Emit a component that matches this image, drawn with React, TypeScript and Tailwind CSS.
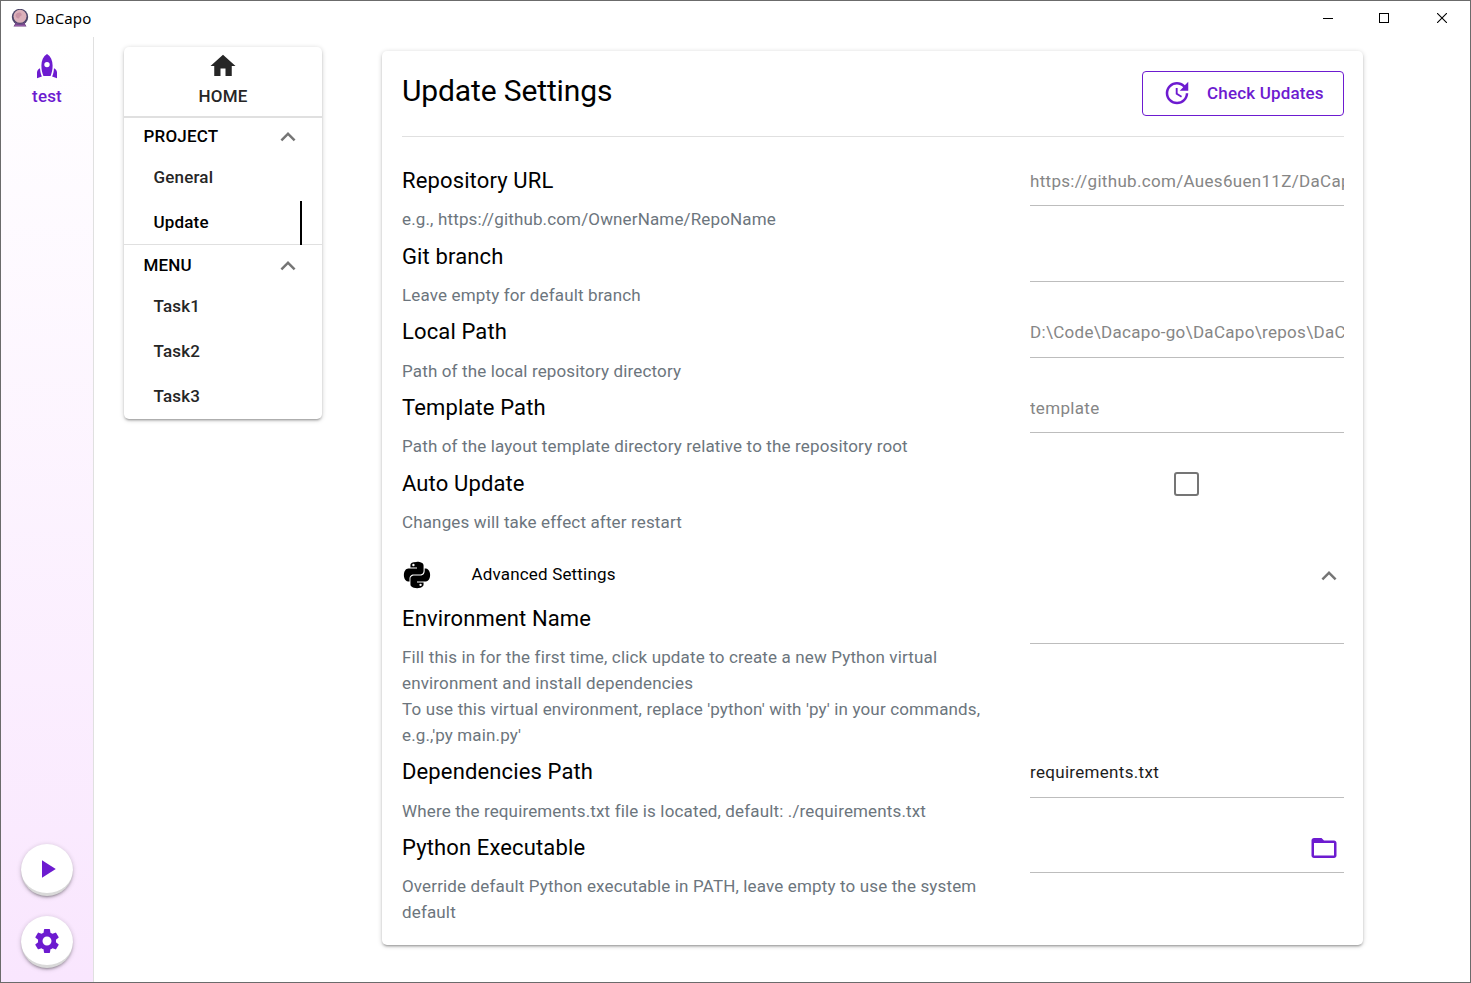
import React from "react";
import { MdHome, MdKeyboardArrowUp, MdPlayArrow, MdSettings, MdFolderOpen } from "react-icons/md";
import { IoLogoPython } from "react-icons/io5";

function Rocket() {
  return (
    <svg viewBox="0 0 20 25" className="mt-[17px] h-[25px] w-[20px] shrink-0" fill="currentColor">
      <path
        fillRule="evenodd"
        d="M10 0c3.800 2.400 5.600 6.500 5.600 11.500 0 4-.7 7.300-2 10.500H6.400C5.100 18.800 4.400 15.500 4.400 11.500 4.400 6.500 6.200 2.400 10 0zm0 7.900a2.700 2.700 0 1 0 0 5.400 2.700 2.700 0 0 0 0-5.400z"
      />
      <path d="M3 14.300c.2 3.200.8 5.900 1.900 8.300L0 24.300V18.500c0-1.800 1.200-3.300 3-4.200zM17 14.300c-.2 3.200-.8 5.900-1.900 8.300l4.900 1.700V18.500c0-1.800-1.200-3.300-3-4.200z" />
    </svg>
  );
}

function UpdateIcon() {
  return (
    <svg viewBox="0 0 24 24" className="-mt-[1px] ml-[19px] size-[30px]" fill="currentColor">
      <path d="M21,10.12H14.22L16.96,7.3C14.23,4.6 9.81,4.5 7.08,7.2C4.35,9.91 4.35,14.28 7.08,17C9.81,19.7 14.23,19.7 16.96,17C18.32,15.65 19,14.08 19,12.1H21C21,14.08 20.12,16.65 18.36,18.39C14.85,21.87 9.15,21.87 5.64,18.39C2.14,14.92 2.11,9.28 5.62,5.81C9.13,2.34 14.76,2.34 18.27,5.81L21,3V10.12M12.5,8V12.25L16,14.33L15.28,15.54L11,13V8H12.5Z" />
    </svg>
  );
}

function Logo() {
  return (
    <svg viewBox="0 0 18 18" className="-mt-[2px] size-[18px]">
      <path d="M4.500 14h9l2 3.500h-13z" fill="#6d3f80" />
      <circle cx="9" cy="8" r="8.200" fill="#4a4468" />
      <circle cx="9" cy="7.300" r="6.500" fill="#dcb0ba" />
      <path d="M4.500 6c2-3 5-3 6-1s-1.500 1.500-2 3.500-4 .5-4-2.500z" fill="#c893a5" />
      <path d="M3.500 12.500c3 3 8 3 11 0l-1.500 3h-8z" fill="#7a4a90" />
      <path d="M4 16.300h10" stroke="#a05fae" />
    </svg>
  );
}

function TitleBar() {
  return (
    <header className="flex h-9 shrink-0 items-center pr-[23px] pl-[10px]">
      <Logo />
      <span className="-mt-[2px] ml-[6px] flex-1 font-['Noto_Sans',sans-serif] text-[15px] tracking-[0.15px] text-black">DaCapo</span>
      <div className="-mt-[2px] flex gap-[46px]">
        <svg viewBox="0 0 10 10" className="h-[10px] w-[10px]">
          <path d="M0 5.500h10" stroke="#000" shapeRendering="crispEdges" />
        </svg>
        <svg viewBox="0 0 10 10" className="h-[10px] w-[10px]">
          <rect x=".5" y=".5" width="9" height="9" fill="none" stroke="#000" shapeRendering="crispEdges" />
        </svg>
        <svg viewBox="0 0 10 10" className="ml-[2px] h-[10px] w-[10px]">
          <path d="M0 0l10 10M10 0L0 10" stroke="#000" strokeWidth="1.100" />
        </svg>
      </div>
    </header>
  );
}

const cardShadow = "shadow-[0_1px_5px_rgba(0,0,0,0.2),0_2px_2px_rgba(0,0,0,0.14),0_3px_1px_-2px_rgba(0,0,0,0.12)]";

function MenuHead({ label, className }: { label: string; className: string }) {
  return (
    <div className={"flex items-center justify-between pr-[19px] pl-[19.5px] text-black " + className}>
      <span>{label}</span>
      <MdKeyboardArrowUp className="size-[30px] text-[#757575]" />
    </div>
  );
}

function MenuItem({ label, className = "h-[45px]" }: { label: string; className?: string }) {
  return <div className={"mr-5 flex items-center pl-[29.5px] " + className}>{label}</div>;
}

type FieldProps = {
  title: string;
  hint: React.ReactNode;
  className?: string;
  children?: React.ReactNode;
  line?: boolean;
};

function Field({ title, hint, className = "h-[75.75px]", children, line = true }: FieldProps) {
  return (
    <div className={"flex justify-between " + className}>
      <div className="w-[608px]">
        <div className="h-[51px] pt-[11.75px] text-[22px] leading-[28px] tracking-[0.13px] text-black">{title}</div>
        <div className="text-[17px] leading-[26px] tracking-[0.145px] text-[#6c757d]">{hint}</div>
      </div>
      <div
        className={
          line
            ? "flex h-[51px] w-[314px] items-center overflow-hidden border-b border-[#bdbdbd] pt-[3px] text-[17px] tracking-[0.31px] whitespace-nowrap"
            : "flex h-[51px] w-[314px] items-center justify-center pr-[2px]"
        }
      >
        {children}
      </div>
    </div>
  );
}

function RoundButton({ children }: { children: React.ReactNode }) {
  return (
    <button className={"flex size-[52px] items-center justify-center rounded-full border-b-3 border-black/15 bg-white " + cardShadow}>
      {children}
    </button>
  );
}

export default function App() {
  return (
    <div className="flex h-[983px] w-[1471px] flex-col overflow-hidden border border-[#6b6b6b] bg-white font-[Roboto,sans-serif] text-[17px] tracking-[0.17px] text-[#262626]">
      <TitleBar />
      <div className="flex min-h-0 flex-1">
        <aside className="flex w-[93px] shrink-0 flex-col items-center border-r border-[#e0e0e0] bg-linear-to-b from-white to-[#f9e6fe] pb-[14px] text-[#6d1bd0]">
          <Rocket />
          <span className="mt-[5px] font-medium">test</span>
          <div className="mt-auto flex flex-col gap-5">
            <RoundButton>
              <MdPlayArrow className="size-[30px]" />
            </RoundButton>
            <RoundButton>
              <MdSettings className="size-[30px]" />
            </RoundButton>
          </div>
        </aside>
        <nav className={"mt-[10px] ml-[30px] h-[372px] w-[198px] shrink-0 rounded-[5px] font-medium " + cardShadow}>
          <div className="flex h-[71px] flex-col items-center border-b-2 border-[#e0e0e0] pt-[4px]">
            <MdHome className="size-[30px]" />
            <span className="mt-[3px]">HOME</span>
          </div>
          <div className="h-[127px] border-b border-[#e0e0e0]">
            <MenuHead label="PROJECT" className="h-[38px]" />
            <MenuItem label="General" className="h-[45px] pb-[2px]" />
            <MenuItem label="Update" className="h-[44px] border-r-2 border-black pb-[1px] text-black" />
          </div>
          <MenuHead label="MENU" className="h-[39px] pt-[2px]" />
          <MenuItem label="Task1" />
          <MenuItem label="Task2" />
          <MenuItem label="Task3" />
        </nav>
        <main className={"mt-[14px] ml-[60px] h-[894px] w-[981px] shrink-0 rounded-[5px] pr-[19px] pl-5 " + cardShadow}>
          <div className="flex h-[86px] items-start justify-between border-b border-[#e0e0e0]">
            <h1 className="pt-[20px] text-[30px] leading-[40px] tracking-[-0.13px] text-black">Update Settings</h1>
            <button className="mt-5 flex h-[45px] w-[202px] items-center rounded-[4px] border border-[#6d1bd0] font-medium text-[#6d1bd0]">
              <UpdateIcon />
              <span className="ml-[15px]">Check Updates</span>
            </button>
          </div>
          <div className="pt-[18px]">
            <Field title="Repository URL" hint="e.g., https://github.com/OwnerName/RepoName">
              <span className="text-[#868686]">https://github.com/Aues6uen11Z/DaCapo</span>
            </Field>
            <Field title="Git branch" hint="Leave empty for default branch" />
            <Field title="Local Path" hint="Path of the local repository directory">
              <span className="text-[#868686]">D:\Code\Dacapo-go\DaCapo\repos\DaCapo</span>
            </Field>
            <Field title="Template Path" hint="Path of the layout template directory relative to the repository root">
              <span className="text-[#868686]">template</span>
            </Field>
            <Field title="Auto Update" hint="Changes will take effect after restart" line={false}>
              <div className="h-[24px] w-[25px] rounded-[3px] border-2 border-[#757575]" />
            </Field>
            <div className="flex h-[59px] items-center pt-[24px]">
              <IoLogoPython className="size-[30px] text-black" />
              <span className="-mt-[1px] ml-[39.5px] flex-1 text-black">Advanced Settings</span>
              <MdKeyboardArrowUp className="mt-[1px] size-[30px] text-[#757575]" />
            </div>
            <Field
              className="h-[153.75px]"
              title="Environment Name"
              hint={
                <>
                  Fill this in for the first time, click update to create a new Python virtual
                  <br />
                  environment and install dependencies
                  <br />
                  To use this virtual environment, replace 'python' with 'py' in your commands,
                  <br />
                  e.g.,'py main.py'
                </>
              }
            />
            <Field title="Dependencies Path" hint="Where the requirements.txt file is located, default: ./requirements.txt">
              <span className="text-[#1d1d1d]">requirements.txt</span>
            </Field>
            <Field
              title="Python Executable"
              hint={
                <>
                  Override default Python executable in PATH, leave empty to use the system
                  <br />
                  default
                </>
              }
            >
              <MdFolderOpen className="mr-[5px] mb-[1px] ml-auto size-[30px] text-[#6d1bd0]" />
            </Field>
          </div>
        </main>
      </div>
    </div>
  );
}
